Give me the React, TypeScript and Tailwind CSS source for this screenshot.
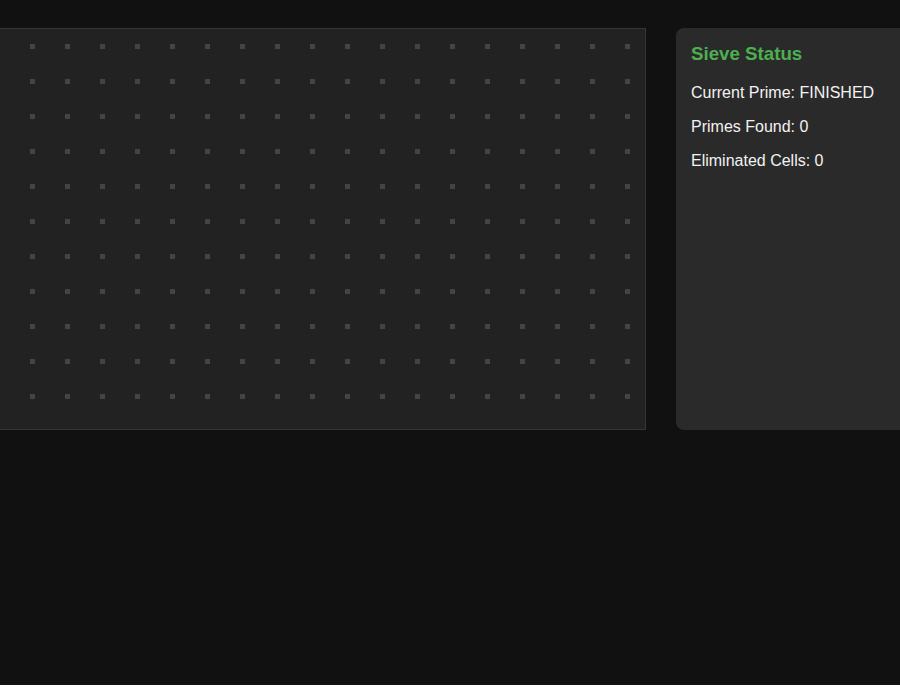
import React from "react";

const COLS = 20;
const ROWS = 12;
const CELL = 35;

function SieveGrid() {
  const dots: { x: number; y: number }[] = [];
  for (let r = 0; r < ROWS; r++) {
    for (let c = 0; c < COLS; c++) {
      const x = c * CELL + 15;
      const y = r * CELL + 15;
      if (y + 5 <= 400) dots.push({ x, y });
    }
  }
  return (
    <div className="shrink-0 border border-[#363636] bg-[#222222]">
      <svg width={700} height={400} className="block">
        {dots.map((d, i) => (
          <rect key={i} x={d.x} y={d.y} width={5} height={5} fill="#444444" />
        ))}
      </svg>
    </div>
  );
}

export default function App() {
  return (
    <div className="h-[685px] bg-[#111111] font-['Liberation_Sans',Arial,sans-serif]">
      <div className="flex justify-center items-stretch gap-[30px] pt-[28px]">
        <SieveGrid />

        {/* Status panel */}
        <div className="w-[280px] shrink-0 rounded-lg bg-[#2a2a2a] p-[15px]">
          <h3 className="text-[18.72px] leading-[21px] font-bold text-[#4caf50] mb-[20px]">
            Sieve Status
          </h3>
          <p className="text-[16px] leading-[18px] text-[#f2f2f2] mb-4">
            Current Prime: FINISHED
          </p>
          <p className="text-[16px] leading-[18px] text-[#f2f2f2] mb-4">
            Primes Found: 0
          </p>
          <p className="text-[16px] leading-[18px] text-[#f2f2f2]">
            Eliminated Cells: 0
          </p>
        </div>
      </div>
    </div>
  );
}
